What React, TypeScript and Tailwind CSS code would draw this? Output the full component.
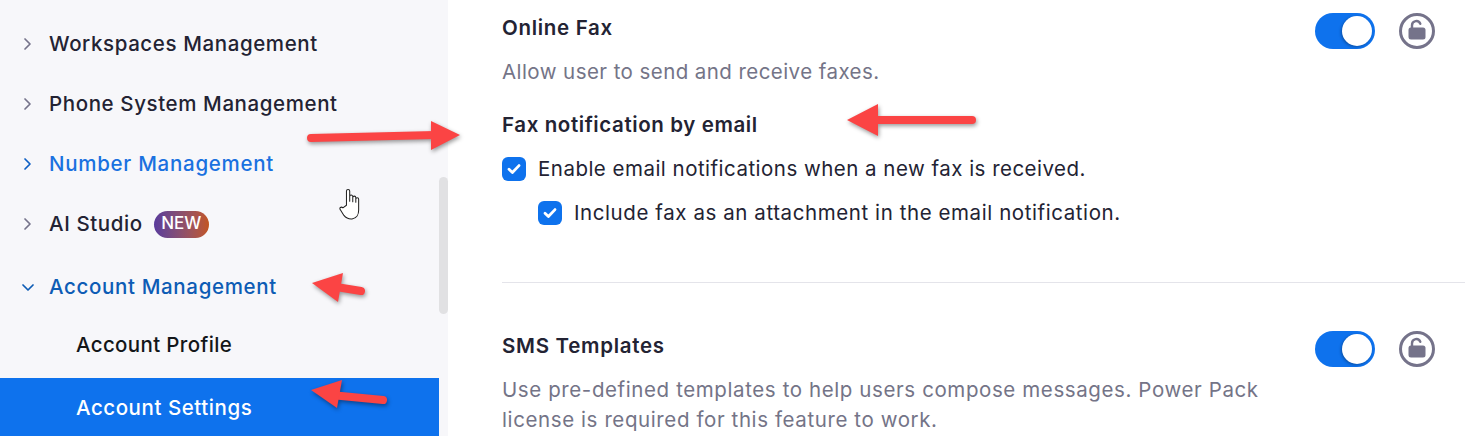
import React from "react";

const font = { fontFamily: "Inter, 'Liberation Sans', sans-serif" };

function Chevron({ down, color }: { down?: boolean; color: string }) {
  return (
    <svg width="12" height="14" viewBox="0 0 12 14" fill="none" stroke={color} strokeWidth="1.7" strokeLinecap="round" strokeLinejoin="round">
      {down ? <path d="M1 5l5 5 5-5" /> : <path d="M3 2l5 5-5 5" />}
    </svg>
  );
}

function NavRow({ label, tone, chevron, down, children, className }: { label: string; tone: string; chevron: string; down?: boolean; children?: React.ReactNode; className: string }) {
  return (
    <div className={`flex items-center ${className}`}>
      <span className="flex w-[49px] justify-end pr-[15px]">
        <Chevron color={chevron} down={down} />
      </span>
      <span className={`text-[20.5px] font-medium ${tone}`}>{label}</span>
      {children}
    </div>
  );
}

function Toggle() {
  return (
    <span className="flex h-9 w-[60px] items-center justify-end rounded-full bg-[#0e72ed] pr-[3px]">
      <span className="h-[30px] w-[30px] rounded-full bg-white shadow-[-1px_1px_3px_rgba(0,0,0,0.3)]" />
    </span>
  );
}

function Lock() {
  return (
    <svg width="36" height="36" viewBox="0 0 36 36" fill="none">
      <circle cx="18" cy="18" r="16.5" stroke="#75738a" strokeWidth="3" />
      <path d="M13 15.5v-3.2a4.3 4.3 0 0 1 8.3-1.5" stroke="#75738a" strokeWidth="2.4" strokeLinecap="round" />
      <rect x="9.5" y="14.5" width="17" height="12" rx="2.5" fill="#75738a" />
    </svg>
  );
}

function Check() {
  return (
    <span className="flex h-6 w-6 shrink-0 items-center justify-center rounded-[6px] bg-[#0e72ed]">
      <svg width="14" height="12" viewBox="0 0 14 12" fill="none" stroke="#fff" strokeWidth="2.8" strokeLinecap="round" strokeLinejoin="round">
        <path d="M2 6.2l3.4 3.3L12 2.6" />
      </svg>
    </span>
  );
}

function Arrow({ className, w, h, d, head }: { className: string; w: number; h: number; d: string; head: string }) {
  return (
    <svg className={`absolute ${className}`} width={w} height={h} viewBox={`0 0 ${w} ${h}`} fill="none" style={{ filter: "drop-shadow(1px 2px 2px rgba(0,0,0,0.4))" }}>
      <path d={d} stroke="#fb4444" strokeWidth="8" strokeLinecap="round" />
      <path d={head} fill="#fb4444" />
    </svg>
  );
}

export default function App() {
  return (
    <div className="relative flex h-[436px] w-[1465px] overflow-hidden bg-white" style={font}>
      <aside className="relative flex w-[448px] shrink-0 flex-col bg-[#f7f7fa] pt-[14px]">
        <NavRow className="h-[60px]" label="Workspaces Management" tone="tracking-[0.6px] text-[#232333]" chevron="#75738a" />
        <NavRow className="h-[60px]" label="Phone System Management" tone="tracking-[0.6px] text-[#232333]" chevron="#75738a" />
        <NavRow className="h-[60px]" label="Number Management" tone="tracking-[0.72px] text-[#1a71e0]" chevron="#0e5fc4" />
        <NavRow className="h-[60px]" label="AI Studio" tone="tracking-[0.6px] text-[#232333]" chevron="#75738a">
          <span className="ml-[11px] flex h-[27px] w-[55px] items-center justify-center rounded-full bg-gradient-to-r from-[#5a3a9c] to-[#c2541c] text-[17px] font-medium text-white">NEW</span>
        </NavRow>
        <NavRow className="mt-[3px] h-[60px]" down label="Account Management" tone="tracking-[0.65px] text-[#0d5cb5]" chevron="#0d5cb5" />
        <div className="flex h-[56px] items-center pl-[76px] text-[20.5px] font-medium tracking-[0.35px] text-[#131619]">Account Profile</div>
        <div className="mt-[5px] flex h-[58px] w-[439px] items-center bg-[#0e72ed] pl-[76px] pt-[2px] text-[20.5px] font-medium tracking-[0.55px] text-white">Account Settings</div>
        <div className="absolute left-[439px] top-[177px] h-[137px] w-[9px] rounded-full bg-[#e1e1e3]" />
      </aside>

      <main className="flex-1 pl-[54px]">
        <section className="flex pt-[13px]">
          <div className="flex-1">
            <h3 className="mt-[1px] text-[20.5px] font-semibold leading-[28px] tracking-[0.7px] text-[#232333]">Online Fax</h3>
            <p className="mt-[16px] text-[20.5px] leading-[28px] tracking-[0.43px] text-[#747487]">Allow user to send and receive faxes.</p>
            <h4 className="mt-[25px] text-[20.5px] font-semibold leading-[28px] tracking-[0.6px] text-[#232333]">Fax notification by email</h4>
            <label className="mt-[18px] flex items-center gap-3 text-[20.5px] leading-6 tracking-[0.48px] text-[#232333]"><Check />Enable email notifications when a new fax is received.</label>
            <label className="ml-9 mt-5 flex items-center gap-3 text-[20.5px] leading-6 tracking-[0.58px] text-[#232333]"><Check />Include fax as an attachment in the email notification.</label>
          </div>
          <div className="flex shrink-0 gap-6 pr-[30px]"><Toggle /><Lock /></div>
        </section>
        <hr className="mt-[57px] border-[#e4e4ea]" />
        <section className="flex pt-[48px]">
          <div className="w-[800px] flex-none">
            <h3 className="text-[20.5px] font-semibold leading-[30px] tracking-[0.7px] text-[#232333]">SMS Templates</h3>
            <p className="mt-[14px] text-[20.5px] leading-[30px] tracking-[0.6px] text-[#747487]">Use pre-defined templates to help users compose messages. Power Pack<br />license is required for this feature to work.</p>
          </div>
          <div className="ml-auto flex shrink-0 gap-6 pr-[30px]"><Toggle /><Lock /></div>
        </section>
      </main>

      <Arrow className="left-[305px] top-[119px]" w={158} h={36} d="M6 19 L130 16" head="M126 2 L155 16 L126 31 Z" />
      <Arrow className="left-[846px] top-[103px]" w={134} h={34} d="M126 17 L28 17" head="M32 1 L1 17 L32 33 Z" />
      <Arrow className="left-[310px] top-[270px]" w={60} h={36} d="M51 21 L20 16" head="M33 3 L2 13 L28 32 Z" />
      <Arrow className="left-[309px] top-[378px]" w={82} h={34} d="M74 22 L22 17" head="M33 2 L2 12 L28 30 Z" />

      <svg className="absolute left-[336px] top-[188px]" width="26" height="32" viewBox="0 1 21 31.5" fill="#fff" stroke="#1f1f1f" strokeWidth="1" strokeLinejoin="round">
        <path d="M8 18 V4 a1.6 1.6 0 0 1 3.2 0 V14 V9.5 a1.5 1.5 0 0 1 3 0 V14.5 V10.5 a1.5 1.5 0 0 1 3 0 V15 V12 a1.4 1.4 0 0 1 2.8 0 V23 c0 4-2 8-6.5 8.5 c-4 .3-6-1-8-3.5 L2 22.5 c-1.5-2 .8-3.5 2.5-2 Z" />
      </svg>
    </div>
  );
}
